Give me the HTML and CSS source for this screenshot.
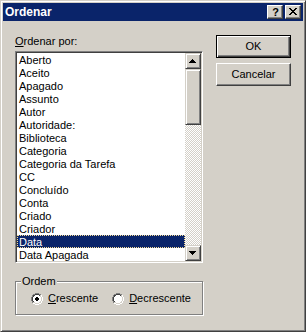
FILE: index.html
```html
<!DOCTYPE html>
<html>
<head>
<meta charset="utf-8">
<title>Ordenar</title>
<link rel="stylesheet" href="styles.css">
</head>
<body>
<div class="window">
  <div class="titlebar">
    <span class="title">Ordenar</span>
    <div class="tbuttons">
      <div class="tbtn help">?</div>
      <div class="tbtn close">
        <svg width="8" height="7" viewBox="0 0 8 7" shape-rendering="crispEdges"><path d="M0 0h2v1h-2z M6 0h2v1h-2z M1 1h2v1h-2z M5 1h2v1h-2z M2 2h4v1h-4z M3 3h2v1h-2z M2 4h4v1h-4z M1 5h2v1h-2z M5 5h2v1h-2z M0 6h2v1h-2z M6 6h2v1h-2z" fill="#000"/></svg>
      </div>
    </div>
  </div>
  <div class="content">
    <div class="left">
      <div class="label"><u>O</u>rdenar por:</div>
      <div class="listbox">
        <ul class="items">
          <li>Aberto</li>
          <li>Aceito</li>
          <li>Apagado</li>
          <li>Assunto</li>
          <li>Autor</li>
          <li>Autoridade:</li>
          <li>Biblioteca</li>
          <li>Categoria</li>
          <li>Categoria da Tarefa</li>
          <li>CC</li>
          <li>Concluído</li>
          <li>Conta</li>
          <li>Criado</li>
          <li>Criador</li>
          <li class="selected">Data</li>
          <li>Data Apagada</li>
        </ul>
        <div class="scrollbar">
          <div class="sbtn">
            <svg width="14" height="14" viewBox="0 0 14 14" shape-rendering="crispEdges"><path d="M6 5h1v1h-1z M5 6h3v1h-3z M4 7h5v1h-5z M3 8h7v1h-7z" fill="#000"/></svg>
          </div>
          <div class="thumb"></div>
          <div class="track"></div>
          <div class="sbtn">
            <svg width="14" height="14" viewBox="0 0 14 14" shape-rendering="crispEdges"><path d="M3 5h7v1h-7z M4 6h5v1h-5z M5 7h3v1h-3z M6 8h1v1h-1z" fill="#000"/></svg>
          </div>
        </div>
      </div>
      <div class="group">
        <span class="legend">Ordem</span>
        <div class="radios">
          <div class="radio">
            <svg width="12" height="12" viewBox="0 0 12 12" shape-rendering="crispEdges">
              <path d="M4 0h4v1h-4z M2 1h2v1h-2z M8 1h2v1h-2z M1 2h1v2h-1z M0 4h1v4h-1z M1 8h1v2h-1z" fill="#808080"/>
              <path d="M10 2h1v2h-1z M11 4h1v4h-1z M10 8h1v2h-1z M2 10h2v1h-2z M8 10h2v1h-2z M4 11h4v1h-4z" fill="#fff"/>
              <path d="M4 1h4v1h-4z M2 2h2v1h-2z M8 2h1v1h-1z M2 3h1v1h-1z M1 4h1v4h-1z M2 8h1v1h-1z" fill="#404040"/>
              <path d="M9 2h1v1h-1z M9 3h1v1h-1z M10 4h1v4h-1z M9 8h1v1h-1z M2 9h2v1h-2z M8 9h2v1h-2z M4 10h4v1h-4z" fill="#d4d0c8"/>
              <path d="M4 2h4v1h-4z M3 3h6v1h-6z M2 4h8v4h-8z M3 8h6v1h-6z M4 9h4v1h-4z" fill="#fff"/>
              <path d="M5 4h2v1h-2z M4 5h4v2h-4z M5 7h2v1h-2z" fill="#000"/>
            </svg>
            <span class="rlabel"><u>C</u>rescente</span>
          </div>
          <div class="radio">
            <svg width="12" height="12" viewBox="0 0 12 12" shape-rendering="crispEdges">
              <path d="M4 0h4v1h-4z M2 1h2v1h-2z M8 1h2v1h-2z M1 2h1v2h-1z M0 4h1v4h-1z M1 8h1v2h-1z" fill="#808080"/>
              <path d="M10 2h1v2h-1z M11 4h1v4h-1z M10 8h1v2h-1z M2 10h2v1h-2z M8 10h2v1h-2z M4 11h4v1h-4z" fill="#fff"/>
              <path d="M4 1h4v1h-4z M2 2h2v1h-2z M8 2h1v1h-1z M2 3h1v1h-1z M1 4h1v4h-1z M2 8h1v1h-1z" fill="#404040"/>
              <path d="M9 2h1v1h-1z M9 3h1v1h-1z M10 4h1v4h-1z M9 8h1v1h-1z M2 9h2v1h-2z M8 9h2v1h-2z M4 10h4v1h-4z" fill="#d4d0c8"/>
              <path d="M4 2h4v1h-4z M3 3h6v1h-6z M2 4h8v4h-8z M3 8h6v1h-6z M4 9h4v1h-4z" fill="#fff"/>
            </svg>
            <span class="rlabel"><u>D</u>ecrescente</span>
          </div>
        </div>
      </div>
    </div>
    <div class="right">
      <div class="btn default">OK</div>
      <div class="btn">Cancelar</div>
    </div>
  </div>
</div>
</body>
</html>
```

FILE: styles.css
```css
* { box-sizing: border-box; }

html, body {
  margin: 0;
  padding: 0;
  background: #d4d0c8;
}

body {
  font-family: "Liberation Sans", Arial, sans-serif;
  font-size: 11px;
  color: #000;
}

.window {
  width: 306px;
  height: 332px;
  background: #d4d0c8;
  border: 1px solid;
  border-color: #d4d0c8 #404040 #404040 #d4d0c8;
  box-shadow: inset 1px 1px #fff, inset -1px -1px #808080;
  padding: 2px;
}

.titlebar {
  height: 18px;
  background: #0a246a;
  display: flex;
  align-items: center;
  justify-content: space-between;
  padding: 0 2px 0 2px;
}

.title {
  color: #fff;
  font-weight: bold;
  font-size: 12px;
  line-height: 18px;
}

.tbuttons {
  display: flex;
  gap: 2px;
}

.tbtn {
  width: 16px;
  height: 14px;
  background: #d4d0c8;
  border: 1px solid;
  border-color: #fff #404040 #404040 #fff;
  box-shadow: inset -1px -1px #808080;
  display: flex;
  align-items: center;
  justify-content: center;
}

.tbtn.help {
  font-weight: bold;
  font-size: 11px;
  line-height: 12px;
  padding-left: 1px;
}

.tbtn.close svg {
  display: block;
  margin: 0 1px 1px 0;
}

.content {
  display: flex;
  gap: 13px;
  padding: 14px 0 0 12px;
}

.left {
  width: 188px;
  display: flex;
  flex-direction: column;
}

.label {
  height: 16px;
  line-height: 13px;
}

.listbox {
  height: 212px;
  display: flex;
  border: 1px solid;
  border-color: #808080 #fff #fff #808080;
  box-shadow: inset 1px 1px #404040, inset -1px -1px #d4d0c8;
  padding: 1px;
  background: #fff;
}

.items {
  list-style: none;
  margin: 0;
  padding: 0;
  flex: 1;
  background: #fff;
}

.items li {
  height: 13px;
  line-height: 12px;
  padding: 1px 0 0 2px;
  white-space: nowrap;
}

.items li.selected {
  background: #0a246a;
  color: #fff;
  outline: 1px dotted #f5db95;
  outline-offset: -1px;
}

.scrollbar {
  width: 16px;
  display: flex;
  flex-direction: column;
}

.sbtn, .thumb {
  width: 16px;
  background: #d4d0c8;
  border: 1px solid;
  border-color: #d4d0c8 #404040 #404040 #d4d0c8;
  box-shadow: inset 1px 1px #fff, inset -1px -1px #808080;
}

.sbtn {
  height: 16px;
}

.sbtn svg {
  display: block;
}

.thumb {
  height: 56px;
}

.track {
  flex: 1;
  background-color: #fff;
  background-image: repeating-conic-gradient(#d4d0c8 0 25%, #fff 0 50%);
  background-size: 2px 2px;
}

.group {
  position: relative;
  margin-top: 18px;
  height: 34px;
  border: 1px solid #808080;
  box-shadow: inset 1px 1px #fff, 1px 1px #fff;
  padding: 10px 0 0 15px;
}

.legend {
  position: absolute;
  left: 5px;
  top: -7px;
  padding: 0 1px;
  line-height: 13px;
  background: #d4d0c8;
}

.radios {
  display: flex;
  gap: 14px;
}

.radio {
  display: flex;
  align-items: center;
  gap: 5px;
  height: 13px;
}

.radio svg {
  display: block;
}

.rlabel {
  line-height: 13px;
}

.right {
  display: flex;
  flex-direction: column;
  gap: 5px;
}

.btn {
  width: 75px;
  height: 23px;
  border: 1px solid;
  border-color: #fff #404040 #404040 #fff;
  box-shadow: inset -1px -1px #808080;
  background: #d4d0c8;
  display: flex;
  align-items: center;
  justify-content: center;
  line-height: 13px;
}

.btn.default {
  border-color: #000;
  box-shadow: inset 1px 1px #fff, inset -1px -1px #404040, inset -2px -2px #808080;
}
```
